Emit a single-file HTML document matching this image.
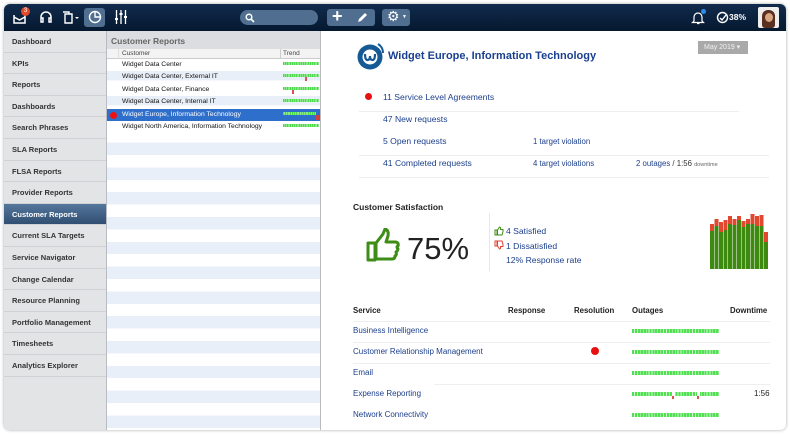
<!DOCTYPE html>
<html><head><meta charset="utf-8"><style>
*{box-sizing:border-box;margin:0;padding:0}
body{width:790px;height:435px;background:#fff;font-family:"Liberation Sans",sans-serif;position:relative;overflow:hidden}
.win{position:absolute;left:4px;top:4px;width:782px;height:426px;border-radius:6px;overflow:hidden;box-shadow:0 0 3px rgba(0,0,0,.35);background:#fff}
.top{position:absolute;left:0;top:0;width:782px;height:27px;background:linear-gradient(#112b4d,#05182f)}
.abs{position:absolute}
.side{position:absolute;left:0;top:27px;width:103px;height:399px;background:#e3e4e6;border-right:1px solid #b8bcc2}
.side div{height:21.6px;line-height:21.6px;padding-left:8px;font-size:7.5px;font-weight:bold;color:#333;border-bottom:1px solid #cfd1d4}
.side div.act{background:linear-gradient(#55779b,#2f4e72);color:#fff}
.mid{position:absolute;left:103px;top:27px;width:214px;height:399px;background:repeating-linear-gradient(#fff 0 12.4px,#e9eff8 12.4px 24.8px);border-right:1px solid #bbb}
.mh{height:18px;background:#dcdde0;font-size:8.5px;font-weight:bold;color:#666;padding:5px 0 0 4px}
.ch{height:10px;background:#f3f3f3;border-bottom:1px solid #ccc;font-size:6.5px;color:#444;position:relative}
.row{height:12.4px;font-size:6.8px;color:#111;position:relative;line-height:12.4px;padding-left:15px}
.trend{position:absolute;left:176px;top:3px;width:36px;height:3px;background:repeating-linear-gradient(90deg,#4cd94c 0 1.3px,#c8f5c8 1.3px 1.8px)}
.g{height:4px;background:repeating-linear-gradient(90deg,#52e052 0 2.2px,#cff7cf 2.2px 2.9px)}
.lk{color:#1c3f8c;font-size:8.6px}
.hr{position:absolute;height:1px;background:#eceef1}
.t{font-size:8px}
</style></head><body>
<div class="win">
<div class="top">
 <svg class="abs" style="left:8px;top:6px" width="16" height="15" viewBox="0 0 16 15"><path d="M2 5v8h11V5M2 7l5.5 3L13 7" fill="none" stroke="#fff" stroke-width="1.5"/></svg>
 <div class="abs" style="left:17px;top:3px;width:9px;height:9px;border-radius:50%;background:#e24a2a;color:#fff;font-size:6px;text-align:center;line-height:9px">3</div>
 <svg class="abs" style="left:35px;top:6px" width="14" height="14" viewBox="0 0 14 14"><path d="M2 9V7a5 5 0 0110 0v2M2 8h2v4H2zM10 8h2v4h-2z" fill="none" stroke="#fff" stroke-width="1.5"/></svg>
 <svg class="abs" style="left:57px;top:6px" width="20" height="14" viewBox="0 0 20 14"><path d="M2 2h6v2M4 4h7v9H4z" fill="none" stroke="#fff" stroke-width="1.4"/><path d="M14 7h4l-2 2z" fill="#fff"/></svg>
 <div class="abs" style="left:80px;top:4px;width:21px;height:19px;background:#4f6e90;border-radius:3px"></div>
 <svg class="abs" style="left:84px;top:6px" width="14" height="14" viewBox="0 0 14 14"><circle cx="7" cy="7" r="5.5" fill="none" stroke="#fff" stroke-width="1.4"/><path d="M7 1.5V7h5.5" fill="none" stroke="#fff" stroke-width="1.4"/></svg>
 <svg class="abs" style="left:110px;top:5px" width="14" height="16" viewBox="0 0 14 16"><path d="M2.5 1v14M7 1v14M11.5 1v14" stroke="#fff" stroke-width="1.3"/><rect x="1" y="9" width="3" height="2" fill="#fff"/><rect x="5.5" y="4" width="3" height="2" fill="#fff"/><rect x="10" y="7" width="3" height="2" fill="#fff"/></svg>
 <div class="abs" style="left:236px;top:6px;width:78px;height:15px;background:#4f6e90;border-radius:8px"></div>
 <svg class="abs" style="left:241px;top:9px" width="10" height="10" viewBox="0 0 10 10"><circle cx="4" cy="4" r="2.8" fill="none" stroke="#fff" stroke-width="1.5"/><path d="M6 6l3 3" stroke="#fff" stroke-width="1.6"/></svg>
 <div class="abs" style="left:323px;top:5px;width:48px;height:17px;background:#4f6e90;border-radius:3px"></div>
 <div class="abs" style="left:328px;top:2px;color:#fff;font-size:18px;font-weight:bold">+</div>
 <svg class="abs" style="left:352px;top:8px" width="12" height="12" viewBox="0 0 12 12"><path d="M2 10l1-3 6-6 2 2-6 6z" fill="#fff"/></svg>
 <div class="abs" style="left:378px;top:5px;width:28px;height:17px;background:#4f6e90;border-radius:3px"></div>
 <div class="abs" style="left:383px;top:4px;color:#fff;font-size:14px">⚙</div>
 <div class="abs" style="left:398px;top:10px;color:#fff;font-size:5px">▼</div>
 <svg class="abs" style="left:687px;top:6px" width="14" height="15" viewBox="0 0 14 15"><path d="M3 11V7a4 4 0 018 0v4l1.5 1.5h-11zM6 13.5h2.5" fill="none" stroke="#fff" stroke-width="1.2"/></svg>
 <div class="abs" style="left:697px;top:5px;width:5px;height:5px;border-radius:50%;background:#2f8be6"></div>
 <svg class="abs" style="left:712px;top:7px" width="13" height="13" viewBox="0 0 13 13"><circle cx="6.5" cy="6.5" r="5" fill="none" stroke="#fff" stroke-width="1.4"/><path d="M4 7l2 2 4-5" fill="none" stroke="#fff" stroke-width="1.4"/></svg>
 <div class="abs" style="left:725px;top:8px;color:#fff;font-size:8.5px;font-weight:bold">38%</div>
 <div class="abs" style="left:754px;top:3px;width:21px;height:21px;background:#eee;border-radius:2px;overflow:hidden"><div style="margin:3px 0 0 4px;width:13px;height:18px;border-radius:6px 6px 3px 3px;background:#5a3020"></div><div class="abs" style="left:7px;top:6px;width:8px;height:9px;border-radius:50%;background:#d9a583"></div></div>
</div>
<div class="side">
<div>Dashboard</div><div>KPIs</div><div>Reports</div><div>Dashboards</div><div>Search Phrases</div><div>SLA Reports</div><div>FLSA Reports</div><div>Provider Reports</div><div class="act">Customer Reports</div><div>Current SLA Targets</div><div>Service Navigator</div><div>Change Calendar</div><div>Resource Planning</div><div>Portfolio Management</div><div>Timesheets</div><div>Analytics Explorer</div>
</div>
<div class="mid">
<div class="mh">Customer Reports</div>
<div class="ch"><span class="abs" style="left:15px;top:1px">Customer</span><span class="abs" style="left:173px;top:0;height:10px;border-left:1px solid #ccc;padding-left:2px;padding-top:1px">Trend</span><span class="abs" style="left:11px;top:0;height:10px;border-left:1px solid #ddd"></span></div>
<div class="row" style="background:#fff">Widget Data Center<div class="trend"></div></div>
<div class="row">Widget Data Center, External IT<div class="trend"></div><div class="abs" style="left:198px;top:6px;width:2px;height:4px;background:#e05050"></div></div>
<div class="row" style="background:#fff">Widget Data Center, Finance<div class="trend"></div><div class="abs" style="left:185px;top:6px;width:2px;height:4px;background:#e05050"></div></div>
<div class="row">Widget Data Center, Internal IT<div class="trend"></div></div>
<div class="row" style="background:#2f6fcc;color:#fff"><div class="abs" style="left:3px;top:3px;width:7px;height:7px;border-radius:50%;background:#f01010"></div>Widget Europe, Information Technology<div class="trend" style="width:33px"></div><div class="abs" style="left:209px;top:6px;width:3px;height:5px;background:#d04040"></div></div>
<div class="row" style="background:#fff">Widget North America, Information Technology<div class="trend"></div></div>
</div>
<svg class="abs" style="left:351px;top:36px" width="32" height="32" viewBox="0 0 32 32"><circle cx="15" cy="17" r="12.5" fill="#155a95"/><circle cx="15" cy="17" r="7.5" fill="#fff"/><path d="M10 14q0 6 2.5 6t2.5-4q0 4 2.5 4t2.5-6" fill="none" stroke="#155a95" stroke-width="2.2"/><path d="M23 4q5 3 5 9" fill="none" stroke="#155a95" stroke-width="2"/></svg>
<div class="abs" style="left:384px;top:46px;font-size:11px;font-weight:bold;color:#1b3f8f">Widget Europe, Information Technology</div>
<div class="abs" style="left:694px;top:37px;width:50px;height:13px;background:#a9a9a9;color:#f2f2f2;font-size:7px;line-height:13px;padding-left:6px">May 2019 ▾</div>
<div class="abs" style="left:361px;top:89px;width:7px;height:7px;border-radius:50%;background:#e81010"></div>
<div class="abs lk" style="left:379px;top:88px">11 Service Level Agreements</div>
<div class="hr" style="left:355px;top:107px;width:380px"></div>
<div class="abs lk" style="left:379px;top:110px">47 New requests</div>
<div class="abs lk" style="left:379px;top:132px">5 Open requests</div>
<div class="abs lk" style="left:529px;top:133px;font-size:7.8px">1 target violation</div>
<div class="hr" style="left:355px;top:151px;width:410px"></div>
<div class="abs lk" style="left:379px;top:154px">41 Completed requests</div>
<div class="abs lk" style="left:529px;top:155px;font-size:7.8px">4 target violations</div>
<div class="abs lk" style="left:632px;top:155px;font-size:7.8px">2 outages <span style="color:#333">/ 1:56</span> <span style="color:#666;font-size:5.5px">downtime</span></div>
<div class="hr" style="left:355px;top:173px;width:410px"></div>
<div class="abs" style="left:349px;top:198px;font-size:8.5px;font-weight:bold;color:#222">Customer Satisfaction</div>
<svg class="abs" style="left:362px;top:224px" width="35" height="35" viewBox="0 0 35 35"><path d="M2 15h7v17H2zM10 15l7-9 2-5q4 1 3 7l-2 6h10q3 1 2 4-2 1 0 3-1 3-2 3 1 3-1 4 0 3-3 3H10z" fill="none" stroke="#3d8d16" stroke-width="3" stroke-linejoin="round"/></svg>
<div class="abs" style="left:403px;top:227px;font-size:31px;color:#222">75%</div>
<div class="abs" style="left:485px;top:209px;width:1px;height:58px;background:#e8e8e8"></div>
<svg class="abs" style="left:490px;top:222px" width="10" height="10" viewBox="0 0 10 10"><path d="M1 4h2v5H1zM3.5 4l2-3q1.5 0 1 2.5H9v2l-1 3.5H3.5z" fill="none" stroke="#3d8d16" stroke-width="1"/></svg>
<div class="abs lk" style="left:502px;top:222px">4 Satisfied</div>
<svg class="abs" style="left:490px;top:236px" width="10" height="10" viewBox="0 0 10 10"><path d="M1 1h2v5H1zM3.5 6l2 3q1.5 0 1-2.5H9v-2L8 1H3.5z" fill="none" stroke="#e04030" stroke-width="1"/></svg>
<div class="abs lk" style="left:502px;top:237px">1 Dissatisfied</div>
<div class="abs lk" style="left:502px;top:251px">12% Response rate</div>
<svg class="abs" style="left:706px;top:205px" width="62" height="62" viewBox="0 0 62 62">
<g fill="#e2472f"><rect x="0" y="15" width="4" height="45"/><rect x="4.5" y="10" width="4" height="50"/><rect x="9" y="13" width="4" height="47"/><rect x="13.5" y="11" width="4" height="49"/><rect x="18" y="7" width="4" height="53"/><rect x="22.5" y="10" width="4" height="50"/><rect x="27" y="7" width="4" height="53"/><rect x="31.5" y="12" width="4" height="48"/><rect x="36" y="10" width="4" height="50"/><rect x="40.5" y="5" width="4" height="55"/><rect x="45" y="7" width="4" height="53"/><rect x="49.5" y="6" width="4" height="54"/><rect x="54" y="23" width="4" height="37"/></g>
<g fill="#3e8a10"><rect x="0" y="22" width="4" height="38"/><rect x="4.5" y="17" width="4" height="43"/><rect x="9" y="23" width="4" height="37"/><rect x="13.5" y="21" width="4" height="39"/><rect x="18" y="15" width="4" height="45"/><rect x="22.5" y="16" width="4" height="44"/><rect x="27" y="11" width="4" height="49"/><rect x="31.5" y="18" width="4" height="42"/><rect x="36" y="15" width="4" height="45"/><rect x="40.5" y="15" width="4" height="45"/><rect x="45" y="17" width="4" height="43"/><rect x="49.5" y="17" width="4" height="43"/><rect x="54" y="33" width="4" height="27"/></g></svg>
<div class="abs" style="left:349px;top:302px;font-size:7.8px;font-weight:bold;color:#222">Service</div>
<div class="abs" style="left:504px;top:302px;font-size:7.8px;font-weight:bold;color:#222">Response</div>
<div class="abs" style="left:570px;top:302px;font-size:7.8px;font-weight:bold;color:#222">Resolution</div>
<div class="abs" style="left:628px;top:302px;font-size:7.8px;font-weight:bold;color:#222">Outages</div>
<div class="abs" style="left:726px;top:302px;font-size:7.8px;font-weight:bold;color:#222">Downtime</div>
<div class="hr" style="left:349px;top:317px;width:417px"></div>
<div class="abs lk t" style="left:349px;top:322px">Business Intelligence</div>
<div class="abs g" style="left:628px;top:325px;width:87px"></div>
<div class="hr" style="left:349px;top:338px;width:417px"></div>
<div class="abs lk t" style="left:349px;top:343px">Customer Relationship Management</div>
<div class="abs" style="left:587px;top:343px;width:8px;height:8px;border-radius:50%;background:#e81010"></div>
<div class="abs g" style="left:628px;top:346px;width:87px"></div>
<div class="hr" style="left:349px;top:359px;width:417px"></div>
<div class="abs lk t" style="left:349px;top:364px">Email</div>
<div class="abs g" style="left:628px;top:367px;width:87px"></div>
<div class="hr" style="left:430px;top:380px;width:336px"></div>
<div class="abs lk t" style="left:349px;top:385px">Expense Reporting</div>
<div class="abs g" style="left:628px;top:388px;width:87px"></div>
<div class="abs" style="left:668px;top:388px;width:3px;height:4px;background:#fff"></div>
<div class="abs" style="left:693px;top:388px;width:3px;height:4px;background:#fff"></div>
<div class="abs" style="left:668px;top:392px;width:2px;height:3px;background:#e05050"></div>
<div class="abs" style="left:693px;top:392px;width:2px;height:3px;background:#e05050"></div>
<div class="abs" style="left:750px;top:385px;font-size:8px;color:#222">1:56</div>
<div class="abs lk t" style="left:349px;top:406px">Network Connectivity</div>
<div class="abs g" style="left:628px;top:409px;width:87px"></div>
</div>
</body></html>
